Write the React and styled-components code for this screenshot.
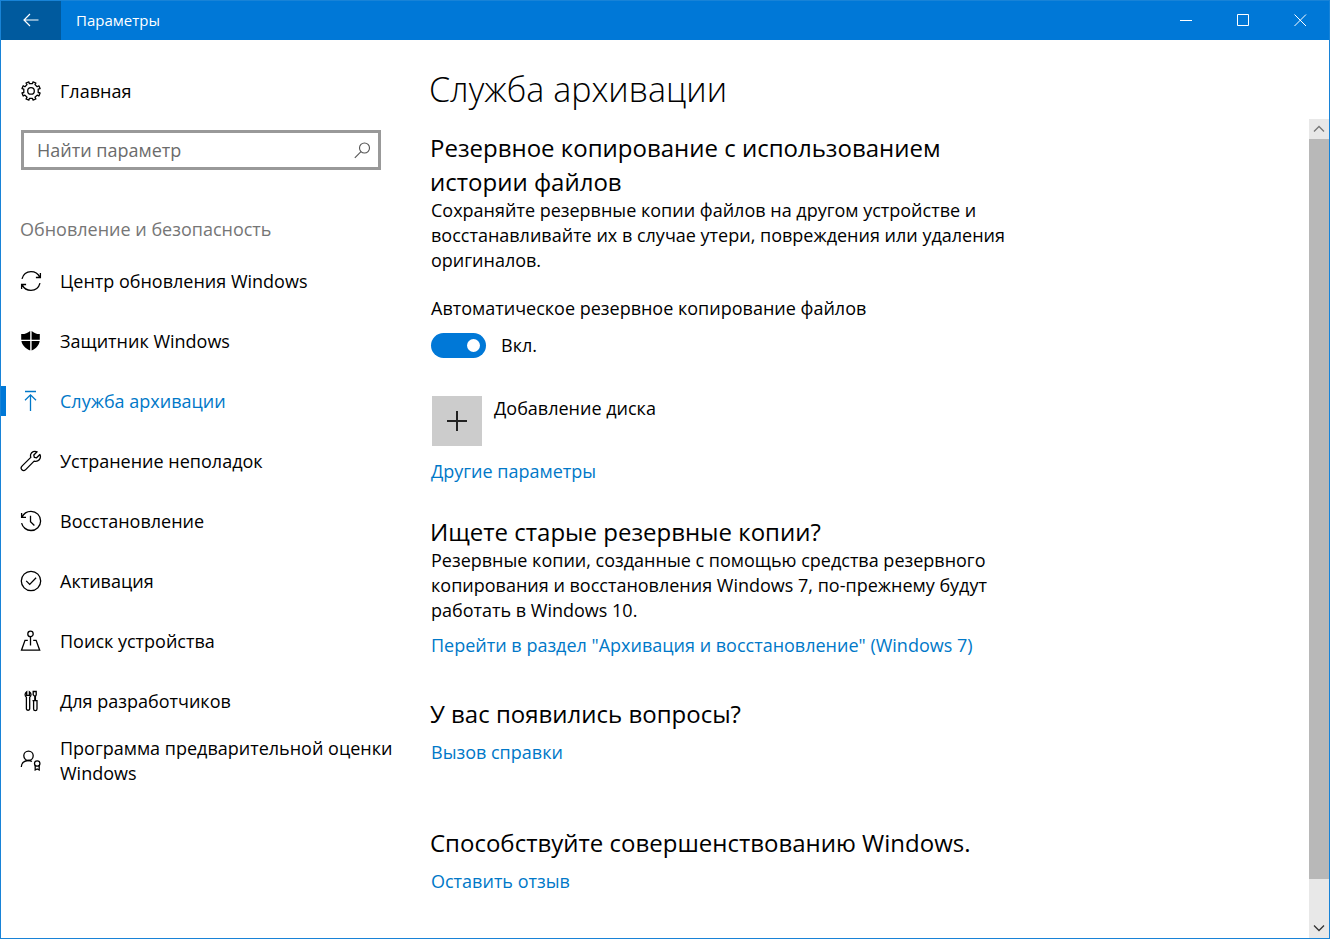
import React, {useState} from "react";
import styled, {createGlobalStyle} from "styled-components";

const GlobalStyle = createGlobalStyle`
  * {
    box-sizing: border-box;
  }

  body {
    margin: 0;
    background: #ffffff;
    color: #000000;
    font-family: "Open Sans", "Noto Sans", sans-serif;
    font-size: 18px;
    line-height: 25px;
  }

  button, input {
    font: inherit;
    color: inherit;
  }

  button {
    padding: 0;
    border: 0;
    background: none;
    cursor: pointer;
  }
`;

const Window = styled.div`
  display: flex;
  flex-direction: column;
  min-height: 100vh;
  border: 1px solid #1883d7;
`;

const TitleBar = styled.header`
  display: flex;
  align-items: stretch;
  height: 39px;
  background: #0078d7;
  color: #ffffff;
`;

const BackButton = styled.button`
  display: flex;
  align-items: center;
  justify-content: center;
  width: 60px;
  padding-bottom: 2px;
  background: #005a9e;
`;

const WindowTitle = styled.div`
  flex: 1;
  padding-left: 15px;
  font-size: 15px;
  line-height: 38px;
`;

const WindowButton = styled.button`
  display: flex;
  align-items: center;
  justify-content: center;
  width: 57px;
`;

const Body = styled.div`
  display: flex;
  flex: 1;
`;

const Sidebar = styled.aside`
  flex: none;
  width: 400px;
  padding-top: 21px;
`;

const NavList = styled.ul`
  margin: 0;
  padding: 0;
  list-style: none;
`;

const NavLink = styled.a`
  display: flex;
  align-items: center;
  min-height: 60px;
  padding-left: 19px;
  color: ${props => props.$active ? "#0078c8" : "#000000"};
  text-decoration: none;
  background: ${props => props.$active
          ? "linear-gradient(#0078d7, #0078d7) 0 50% / 5px 30px no-repeat"
          : "none"};

  svg {
    flex: none;
    margin-right: 18px;
  }
`;

const SearchBox = styled.label`
  display: flex;
  align-items: center;
  height: 40px;
  margin: 9px 20px 0;
  padding: 0 7px 0 13px;
  border: 3px solid #999999;
  color: #555555;
`;

const SearchInput = styled.input`
  flex: 1;
  min-width: 0;
  padding: 0;
  border: 0;
  outline: 0;
  background: none;

  &::placeholder {
    color: #6b6b6b;
    opacity: 1;
  }
`;

const GroupTitle = styled.div`
  margin: 47px 0 9px;
  padding-left: 19px;
  color: #767676;
`;

const Main = styled.main`
  display: flex;
  flex: 1;
  flex-direction: column;
  min-width: 0;
`;

const PageTitle = styled.h1`
  margin: 0;
  padding: 26px 28px 7px;
  font-size: 34px;
  font-weight: 300;
  line-height: 46px;
`;

const ScrollArea = styled.div`
  display: flex;
  flex: 1;
`;

const Content = styled.div`
  flex: 1;
  padding: 12px 29px 40px;
`;

const Section = styled.section`
  max-width: 580px;
  margin-bottom: ${props => props.$gap}px;
`;

const Heading = styled.h2`
  margin: 0;
  font-size: 24px;
  font-weight: 400;
  line-height: 34px;
`;

const Text = styled.p`
  margin: -1px 0 0;
  padding-left: 1px;
`;

const TextLink = styled.a`
  display: block;
  width: fit-content;
  margin-top: ${props => props.$top || 9}px;
  padding-left: 1px;
  color: #0078c8;
  text-decoration: none;
`;

const SwitchLabel = styled.label`
  display: block;
  margin-top: 23px;
  padding-left: 1px;
`;

const SwitchRow = styled.div`
  display: flex;
  align-items: center;
  gap: 15px;
  margin-top: 12px;
  padding-left: 1px;
`;

const Switch = styled.input`
  display: flex;
  align-items: center;
  justify-content: ${props => props.checked ? "flex-end" : "flex-start"};
  appearance: none;
  width: 55px;
  height: 25px;
  margin: 0;
  padding: 0 6px;
  border-radius: 13px;
  background: ${props => props.checked ? "#0078d7" : "#999999"};
  cursor: pointer;

  &::before {
    content: "";
    width: 13px;
    height: 13px;
    border-radius: 50%;
    background: #ffffff;
  }
`;

const AddDrive = styled.button`
  display: flex;
  align-items: flex-start;
  gap: 12px;
  margin: 38px 0 0 2px;
`;

const AddTile = styled.span`
  display: flex;
  align-items: center;
  justify-content: center;
  width: 50px;
  height: 50px;
  background: #cccccc;
  color: #222222;
`;

const ScrollBar = styled.div`
  display: flex;
  flex: none;
  flex-direction: column;
  width: 20px;
  background: #e8e8e8;
`;

const ScrollButton = styled.button`
  display: flex;
  flex: none;
  align-items: center;
  justify-content: center;
  height: 20px;
  color: ${props => props.$dim ? "#777777" : "#333333"};
`;

const ScrollTrack = styled.div`
  flex: 1;
  display: flex;
  flex-direction: column;
`;

const ScrollThumb = styled.div`
  flex: 0 0 95%;
  background: #b8b8b8;
`;

const Icon = ({children, size = 22, width = 1.3}) => (
    <svg width={size} height={size} viewBox={`0 0 ${size} ${size}`} fill="none" stroke="currentColor"
         strokeWidth={width} aria-hidden="true">
        {children}
    </svg>
);

const GearIcon = () => (
    <Icon>
        <path d="M9.3 3.6 8.9 1.8 6 3 7 4.6 4.9 6.7 3.2 5.8 2 8.6 3.8 9.1 3.8 12.5 2 13 3.2 16 4.9 15.1 7 17.3 6 19 8.9 20.2 9.4 18.3 12.5 18.3 13 20.2 15.9 19 15 17.3 17.2 15.1 18.9 16 20.1 13 18.2 12.5 18.2 9.1 20.1 8.6 18.9 5.8 17.2 6.7 15 4.6 15.9 3 13 1.8 12.5 3.6Z"
              strokeLinejoin="round"/>
        <circle cx="11" cy="10.9" r="3.3"/>
    </Icon>
);

const SyncIcon = () => (
    <Icon>
        <path d="M2 8.8C3.2 4.4 6.8 1.6 11 1.6c3.9 0 7.2 2.2 8.8 5.5M20.4 3v4.500h-4.500"/>
        <path d="M20 13.2c-1.2 4.4-4.8 7.2-9 7.2-3.9 0-7.2-2.2-8.8-5.5M1.6 19v-4.500h4.500"/>
    </Icon>
);

const ShieldIcon = () => (
    <Icon>
        <path d="M10.2 1v8.7H1.2V4.1C4.7 4.3 7.6 3.2 10.2 1ZM11.6 1c2.6 2.2 5.5 3.3 8.2 3.1v5.6h-8.2ZM1.4 11h8.8v9.5C5.4 18.3 2.1 15.4 1.4 11ZM11.6 11h8.1c-.7 4.4-3.3 7.3-8.1 9.5Z"
              fill="currentColor" stroke="none"/>
    </Icon>
);

const BackupIcon = () => (
    <Icon>
        <path d="M5 1.500h11M10.500 21V5M5 10.300 10.500 4.800l5.500 5.500"/>
    </Icon>
);

const WrenchIcon = () => (
    <Icon>
        <path d="M19.900 4.500 16.600 7.800 14.300 7.300 13.800 5 17.100 1.800C14.500.6 11.500 1.700 10.700 4.400 10.400 5.400 10.500 6.500 10.800 7.400L2.200 15.900C.9 17.200.9 18.800 1.900 19.800 2.900 20.800 4.500 20.800 5.700 19.600L14.100 11.100C18.300 12.400 21.700 8.500 19.900 4.500Z"
              strokeLinejoin="round"/>
    </Icon>
);

const HistoryIcon = () => (
    <Icon>
        <path d="M2 7.3C3.500 3.700 7 1.300 11 1.300c5.400 0 9.600 4.300 9.600 9.600s-4.300 9.600-9.600 9.600c-4.600 0-8.400-3.200-9.400-7.400M1.600 3v4.400H6M10.500 5.800v6l3.900 3.700"/>
    </Icon>
);

const CheckIcon = () => (
    <Icon>
        <circle cx="11" cy="11" r="9.7"/>
        <path d="m6.2 10.900 3.500 3.500 6.400-6.600"/>
    </Icon>
);

const FindIcon = () => (
    <Icon>
        <circle cx="10.5" cy="3.9" r="2.7"/>
        <path d="M10.500 6.600v9M7.800 10.300H5L1.500 20.200h18.200l-3.600-9.900h-2.900"/>
    </Icon>
);

const ToolsIcon = () => (
    <Icon>
        <path d="M6.700 1.800v3.500h2.700V1.800C11.600 3.300 11.400 6 9.700 7.200V19a1.700 1.700 0 0 1-3.300 0V7.200C4.600 6 4.600 3.200 6.700 1.800Z"/>
        <path d="M13.200 1.500h3v3.300l-.8 1.600v4.200h1.600V19a1.700 1.700 0 0 1-3.400 0v-8.400h1.200V6.400l-1.600-1.600ZM12.500 10.600h5"/>
    </Icon>
);

const InsiderIcon = () => (
    <Icon>
        <circle cx="8.5" cy="5.8" r="4.7"/>
        <path d="M1.300 17c0-3.800 3-6.500 7-6.500 1.500 0 2.500.3 3.600 1"/>
        <circle cx="17.2" cy="13.5" r="2.7"/>
        <path d="M15.200 15.300V20l2-1 2 1v-4.700"/>
    </Icon>
);

const navItems = [
    {text: "Центр обновления Windows", icon: <SyncIcon/>},
    {text: "Защитник Windows", icon: <ShieldIcon/>},
    {text: "Служба архивации", icon: <BackupIcon/>},
    {text: "Устранение неполадок", icon: <WrenchIcon/>},
    {text: "Восстановление", icon: <HistoryIcon/>},
    {text: "Активация", icon: <CheckIcon/>},
    {text: "Поиск устройства", icon: <FindIcon/>},
    {text: "Для разработчиков", icon: <ToolsIcon/>},
    {text: "Программа предварительной оценки Windows", icon: <InsiderIcon/>},
];

const App = () => {
    const [active, setActive] = useState("Служба архивации");
    const [backupOn, setBackupOn] = useState(true);

    return (
        <React.Fragment>
            <GlobalStyle/>
            <Window>
                <TitleBar>
                    <BackButton aria-label="Назад">
                        <Icon size={18} width={1.2}>
                            <path d="M16.500 9H2M8 3 2 9l6 6"/>
                        </Icon>
                    </BackButton>
                    <WindowTitle>Параметры</WindowTitle>
                    <WindowButton aria-label="Свернуть">
                        <Icon size={13} width={1}><path d="M0 6.500h12"/></Icon>
                    </WindowButton>
                    <WindowButton aria-label="Развернуть">
                        <Icon size={13} width={1}><path d="M.5.500h11v11H.5Z"/></Icon>
                    </WindowButton>
                    <WindowButton aria-label="Закрыть">
                        <Icon size={13} width={1}><path d="m.5.500 11.500 11.500M12 .500.500 12"/></Icon>
                    </WindowButton>
                </TitleBar>

                <Body>
                    <Sidebar>
                        <NavLink href="#home"><GearIcon/>Главная</NavLink>
                        <SearchBox>
                            <SearchInput type="text" placeholder="Найти параметр" aria-label="Найти параметр"/>
                            <Icon size={17} width={1.1}>
                                <circle cx="10.5" cy="6" r="5"/>
                                <path d="M7 9.600.8 15.800"/>
                            </Icon>
                        </SearchBox>
                        <GroupTitle>Обновление и безопасность</GroupTitle>
                        <NavList>
                            {navItems.map(item => (
                                <li key={item.text}>
                                    <NavLink
                                        href="#section"
                                        $active={item.text === active}
                                        onClick={() => setActive(item.text)}
                                    >
                                        {item.icon}
                                        <span>{item.text}</span>
                                    </NavLink>
                                </li>
                            ))}
                        </NavList>
                    </Sidebar>

                    <Main>
                        <PageTitle>Служба архивации</PageTitle>
                        <ScrollArea>
                            <Content>
                                <Section $gap={31}>
                                    <Heading>Резервное копирование с использованием истории файлов</Heading>
                                    <Text>
                                        Сохраняйте резервные копии файлов на другом устройстве и восстанавливайте
                                        их в случае утери, повреждения или удаления оригиналов.
                                    </Text>
                                    <SwitchLabel htmlFor="backup">Автоматическое резервное копирование файлов</SwitchLabel>
                                    <SwitchRow>
                                        <Switch
                                            id="backup"
                                            type="checkbox"
                                            checked={backupOn}
                                            onChange={() => setBackupOn(!backupOn)}
                                        />
                                        <span>{backupOn ? "Вкл." : "Откл."}</span>
                                    </SwitchRow>
                                    <AddDrive>
                                        <AddTile>
                                            <Icon size={20} width={2}><path d="M0 10h20M10 0v20"/></Icon>
                                        </AddTile>
                                        <span>Добавление диска</span>
                                    </AddDrive>
                                    <TextLink href="#more" $top={13}>Другие параметры</TextLink>
                                </Section>

                                <Section $gap={39}>
                                    <Heading>Ищете старые резервные копии?</Heading>
                                    <Text>
                                        Резервные копии, созданные с помощью средства резервного копирования и
                                        восстановления Windows 7, по-прежнему будут работать в Windows 10.
                                    </Text>
                                    <TextLink href="#windows7" $top={10}>
                                        Перейти в раздел "Архивация и восстановление" (Windows 7)
                                    </TextLink>
                                </Section>

                                <Section $gap={61}>
                                    <Heading>У вас появились вопросы?</Heading>
                                    <TextLink href="#help">Вызов справки</TextLink>
                                </Section>

                                <Section $gap={0}>
                                    <Heading>Способствуйте совершенствованию Windows.</Heading>
                                    <TextLink href="#feedback">Оставить отзыв</TextLink>
                                </Section>
                            </Content>
                            <ScrollBar>
                                <ScrollButton $dim aria-label="Вверх">
                                    <Icon size={12} width={1.3}><path d="m1 8.500 5-5 5 5"/></Icon>
                                </ScrollButton>
                                <ScrollTrack><ScrollThumb/></ScrollTrack>
                                <ScrollButton aria-label="Вниз">
                                    <Icon size={12} width={1.3}><path d="m1 3.500 5 5 5-5"/></Icon>
                                </ScrollButton>
                            </ScrollBar>
                        </ScrollArea>
                    </Main>
                </Body>
            </Window>
        </React.Fragment>
    )
}

export default App;
